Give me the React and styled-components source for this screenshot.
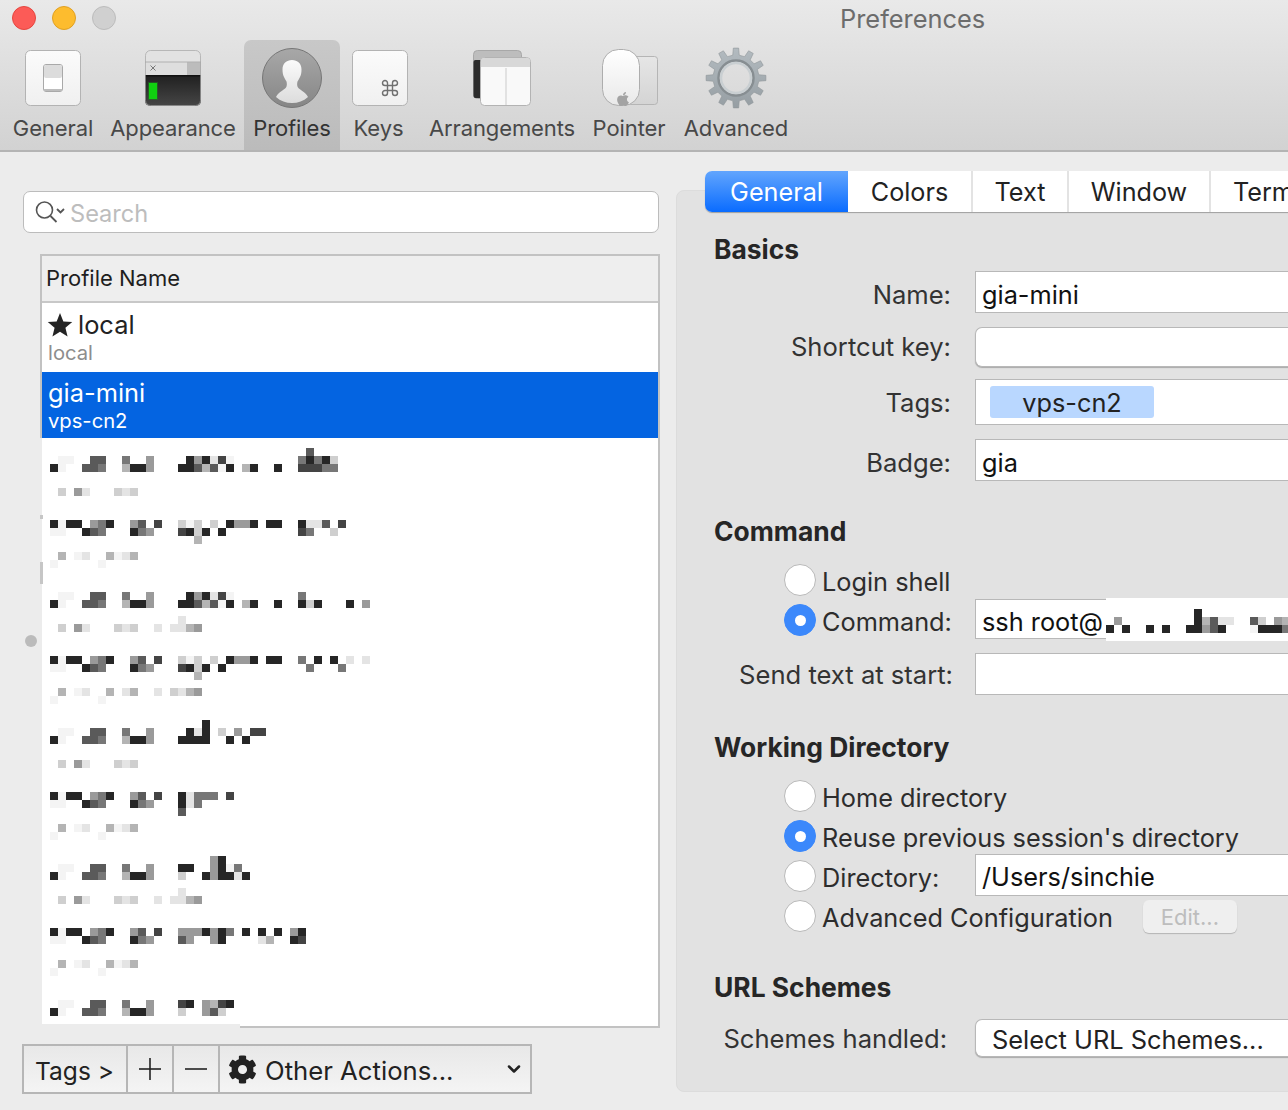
import React from 'react';
import styled, { createGlobalStyle } from 'styled-components';
import { FaApple, FaCog } from 'react-icons/fa';
import { Command as CommandGlyph, ChevronDown } from 'lucide-react';

const FONT = 'Inter, "Noto Sans", "Liberation Sans", sans-serif';

const GlobalStyle = createGlobalStyle`
  html, body {
    margin: 0;
    padding: 0;
    background: #ececec;
  }
  body {
    font-family: ${FONT};
    color: #2b2b2b;
    -webkit-font-smoothing: antialiased;
  }
`;

const Window = styled.div`
  width: 1288px;
  height: 1110px;
  overflow: hidden;
  background: #ececec;
  display: flex;
  flex-direction: column;
`;

const Header = styled.header`
  height: 152px;
  box-sizing: border-box;
  flex: none;
  border-bottom: 2px solid #b4b4b4;
  background: linear-gradient(#e9e9e9, #d2d2d2);
`;

const TitleBar = styled.div`
  height: 40px;
  display: flex;
  align-items: flex-start;
  padding: 6px 0 0 12px;
  box-sizing: border-box;
`;

const Light = styled.span`
  width: 24px;
  height: 24px;
  box-sizing: border-box;
  border-radius: 50%;
  background: ${(props) => props.$color};
  border: 1px solid ${(props) => props.$edge};
  margin-right: 16px;
`;

const Title = styled.div`
  margin: -1px 0 0 708px;
  font-size: 25.4px;
  line-height: 28px;
  color: #6c6c6c;
`;

const Toolbar = styled.nav`
  display: flex;
  padding-left: 4px;
`;

const ToolItem = styled.div`
  width: ${(props) => props.$width}px;
  height: 110px;
  display: flex;
  flex-direction: column;
  align-items: center;
  padding-top: 6px;
  box-sizing: border-box;
  border-radius: 7px 7px 0 0;
  background: ${(props) => (props.$active ? 'linear-gradient(#c8c8c8, #bbbbbb)' : 'none')};
  svg {
    display: block;
    flex: none;
  }
`;

const ToolLabel = styled.span`
  margin-top: 4px;
  font-size: 22px;
  line-height: 28px;
  letter-spacing: -0.1px;
  white-space: nowrap;
  color: ${(props) => (props.$active ? '#333' : '#484848')};
`;

const Main = styled.main`
  flex: 1;
  display: flex;
  min-height: 0;
`;

const LeftColumn = styled.section`
  position: relative;
  width: 654px;
  flex: none;
  box-sizing: border-box;
  padding: 39px 0 0 22px;
`;

const SearchBox = styled.div`
  width: 636px;
  height: 42px;
  box-sizing: border-box;
  margin-left: 1px;
  padding-left: 10px;
  display: flex;
  align-items: center;
  background: #fff;
  border: 1px solid #bcbcbc;
  border-radius: 7px;
`;

const SearchHint = styled.span`
  margin-left: 2px;
  padding-top: 3px;
  font-size: 23.6px;
  color: #bdbdbd;
`;

const ProfileList = styled.div`
  position: relative;
  width: 620px;
  height: 774px;
  box-sizing: border-box;
  margin: 21px 0 0 18px;
  display: flex;
  flex-direction: column;
  border: 2px solid #c2c2c2;
  background: #fff;
`;

const ListHeader = styled.div`
  height: 47px;
  flex: none;
  box-sizing: border-box;
  padding: 0 0 2px 4px;
  display: flex;
  align-items: center;
  font-size: 22px;
  color: #1e1e1e;
  background: #eeeeee;
  border-bottom: 2px solid #c8c8c8;
`;

const ProfileRow = styled.div`
  height: ${(props) => props.$height}px;
  flex: none;
  box-sizing: border-box;
  padding: ${(props) => props.$top}px 0 0 6px;
  background: ${(props) => (props.$selected ? '#0464e1' : '#fff')};
  color: ${(props) => (props.$selected ? '#fff' : '#222')};
`;

const ProfileName = styled.div`
  display: flex;
  align-items: center;
  gap: 5px;
  font-size: 25.4px;
  line-height: 32px;
  svg {
    margin-left: -1px;
  }
`;

const ProfileTag = styled.div`
  font-size: 20.2px;
  line-height: 24px;
  color: ${(props) => (props.$selected ? '#fff' : '#8d8d8d')};
`;

const BlurredRows = styled.div`
  position: relative;
  flex: 1;
  padding-top: 2px;
  background: #fff;
  &::before {
    content: '';
    position: absolute;
    left: -2px;
    top: 0;
    bottom: 0;
    width: 2px;
    background: #ececec;
  }
  svg {
    display: block;
    margin-left: 8px;
  }
`;

const BottomPatch = styled.span`
  position: absolute;
  left: -2px;
  bottom: -2px;
  width: 200px;
  height: 4px;
  background: #ececec;
`;

const SplitTick = styled.span`
  position: absolute;
  left: 40px;
  top: ${(props) => props.$top}px;
  width: 3px;
  height: ${(props) => props.$height}px;
  background: #c6c6c6;
`;

const SplitHandle = styled.span`
  position: absolute;
  left: 25px;
  top: 483px;
  width: 12px;
  height: 12px;
  border-radius: 50%;
  background: #bbbbbb;
`;

const ActionBar = styled.div`
  width: 510px;
  height: 50px;
  box-sizing: border-box;
  margin-top: 16px;
  display: flex;
  border: 2px solid #b6b6b6;
  background: linear-gradient(#e8e8e8, #f4f4f4);
  color: #222;
`;

const ActionCell = styled.div`
  width: ${(props) => props.$width}px;
  flex: ${(props) => (props.$grow ? 1 : 'none')};
  box-sizing: border-box;
  display: flex;
  align-items: center;
  justify-content: ${(props) => (props.$grow ? 'flex-start' : 'center')};
  gap: 8px;
  padding: ${(props) => (props.$grow ? '0 6px 0 8px' : '0 1px 0 0')};
  border-right: ${(props) => (props.$grow ? 'none' : '2px solid #b6b6b6')};
`;

const ActionText = styled.span`
  flex: ${(props) => (props.$wide ? 1 : 'none')};
  padding-top: 3px;
  font-size: ${(props) => (props.$wide ? 25.7 : 24.5)}px;
  white-space: nowrap;
`;

const RightColumn = styled.section`
  width: 680px;
  flex: none;
  padding: 19px 0 0 22px;
  box-sizing: border-box;
`;

const TabBar = styled.div`
  position: relative;
  z-index: 1;
  height: 41px;
  margin: 0 0 -22px 29px;
  display: flex;
  background: #fff;
  border-radius: 7px 0 0 7px;
  box-shadow: 0 1px 1px rgba(0, 0, 0, 0.3);
`;

const Tab = styled.div`
  width: ${(props) => props.$width}px;
  flex: none;
  box-sizing: border-box;
  display: flex;
  align-items: center;
  justify-content: ${(props) => (props.$clip ? 'flex-start' : 'center')};
  padding-left: ${(props) => (props.$clip ? '22px' : '0')};
  font-size: 25.2px;
  color: ${(props) => (props.$active ? '#fff' : '#222')};
  background: ${(props) => (props.$active ? 'linear-gradient(#62a5fd, #0a6cff)' : 'none')};
  border-radius: ${(props) => (props.$active ? '7px 0 0 7px' : '0')};
  border-right: ${(props) => (props.$active ? 'none' : '2px solid #e3e3e3')};
`;

const Panel = styled.div`
  height: 902px;
  box-sizing: border-box;
  padding-top: 42px;
  background: #e2e2e2;
  border: 1px solid #dcdcdc;
  border-radius: 8px;
`;

const SectionTitle = styled.h2`
  margin: ${(props) => props.$top || 0}px 0 0 37px;
  font-size: 26.4px;
  line-height: 32px;
  font-weight: 700;
  color: #262626;
`;

const FormRow = styled.div`
  display: grid;
  grid-template-columns: 274px 1fr;
  column-gap: 24px;
  align-items: center;
  height: ${(props) => props.$height}px;
  margin-top: ${(props) => props.$top || 0}px;
`;

const FieldLabel = styled.label`
  text-align: right;
  font-size: 25.6px;
  line-height: 30px;
  white-space: nowrap;
  color: #333;
  margin-right: ${(props) => props.$inset || 0}px;
  padding-top: ${(props) => props.$drop || 0}px;
`;

const Field = styled.div`
  height: ${(props) => props.$height}px;
  box-sizing: border-box;
  padding: 4px 0 0 6px;
  display: flex;
  align-items: center;
  font-size: 25.3px;
  color: #111;
  background: #fff;
  border: 1px solid #b8b8b8;
  border-right: none;
  border-radius: ${(props) => (props.$round ? '7px 0 0 7px' : '0')};
  box-shadow: ${(props) => (props.$round ? '0 1px 1px rgba(0, 0, 0, 0.25)' : 'none')};
  margin-top: ${(props) => props.$shift || 0}px;
`;

const TagChip = styled.span`
  width: 164px;
  height: 32px;
  margin: -4px 0 0 8px;
  border-radius: 3px;
  background: #b9d7ff;
  display: flex;
  align-items: center;
  justify-content: center;
  font-size: 25.3px;
  color: #222;
`;

const RadioCell = styled.div`
  display: flex;
  align-items: center;
  padding-left: 107px;
  height: 100%;
`;

const RadioDot = styled.span`
  width: 32px;
  height: 32px;
  flex: none;
  box-sizing: border-box;
  border-radius: 50%;
  display: flex;
  align-items: center;
  justify-content: center;
  background: ${(props) => (props.$on ? '#3b88fb' : '#fff')};
  border: 1px solid ${(props) => (props.$on ? '#3b88fb' : '#b9b9b9')};
  &::after {
    content: '';
    display: ${(props) => (props.$on ? 'block' : 'none')};
    width: 11px;
    height: 11px;
    border-radius: 50%;
    background: #fff;
  }
`;

const RadioText = styled.span`
  margin-left: 6px;
  font-size: 25.3px;
  line-height: 30px;
  padding-top: 3px;
  white-space: nowrap;
  color: #2d2d2d;
`;

const EditButton = styled.div`
  width: 94px;
  height: 33px;
  flex: none;
  margin-left: 30px;
  padding-top: 2px;
  box-sizing: border-box;
  display: flex;
  align-items: center;
  justify-content: center;
  font-size: 22px;
  color: #bdbdbd;
  background: #efefef;
  border-radius: 6px;
  box-shadow: 0 1px 1px rgba(0, 0, 0, 0.2);
`;

const CommandBox = styled.div`
  position: relative;
`;

const CommandPatch = styled.span`
  position: absolute;
  left: 131px;
  top: -3px;
  width: 200px;
  height: 43px;
  background: #fff;
  svg {
    display: block;
    margin-top: 11px;
  }
`;

const SelectButton = styled(Field)`
  padding: 2px 0 0 16px;
  font-size: 25.4px;
  color: #222;
`;

const SHADES = {
  1: '#f4f4f4',
  2: '#e4e4e4',
  3: '#cfcfcf',
  4: '#b4b4b4',
  5: '#9a9a9a',
  6: '#777777',
  7: '#5a5a5a',
  8: '#444444',
  9: '#262626',
};

const gap = (n) => '.'.repeat(n);

// pieces that repeat from one redacted profile to the next
const AU = '.11..77..6..5...';
const AL = '91..776..4995...';
const BU = '9199.569..57.8..';
const BL = '11..976...965...';
const S1 = '.3.52...323';
const S2 = '.4.12..4124';
const S2B = '1.....1';
const S3 = '.3.52...323..2.2245';
const S4 = '.4.12..4.24..2.3245';
const OVER = `${gap(16)}2`;

const REDACTED = [
  ['', `${gap(32)}7`, `${AU}.959281........69693`, `${AL}9974719.49..9..88866`, '', '', S1, ''],
  ['', '', `${BU}313.3.9559.99..9227.8`, `${BL}8939.9.........86..3`, `${gap(18)}4`, '', S2, S2B, ''],
  ['', '', `${AU}.959281........6`, `${AL}9974719.49..9..939...9.5`, '', OVER, S3, '', ''],
  ['', `${BU}313.3.9559.99..6.9.9.2.2`, `${BL}8939.9..........6...6`, `${gap(18)}4`, '', S4, S2B, '', ''],
  [`${gap(19)}9`, `${AU}.929.3.5.88`, `${AL}9999..9.9`, '', '', S1, '', ''],
  ['', `${BU}92666.8`, `${BL}926`, `${gap(16)}7`, '', S2, S2B, '', ''],
  [`${gap(20)}59`, `${AU}99..5916`, `${AL}3..959929`, '', OVER, S3, '', '', ''],
  [`${BU}5559596.9.9.9.59`, `${BL}75..59....24..98`, '', '', S2, S2B, '', '', ''],
  [`${AU}89.5489`, `${AL}3..573`],
];

const COMMAND_REDACTED = [
  `${gap(11)}9`,
  `.5${gap(9)}94722..73.54`,
  '9.9..9.9..99579...19996',
];

const PixelBlocks = ({ lines }) => (
  <svg width="400" height={lines.length * 8} shapeRendering="crispEdges" aria-hidden="true">
    {lines.map((line, y) =>
      line.split('').map((shade, x) =>
        shade === '.' ? null : (
          <rect key={`${x}-${y}`} x={x * 8} y={y * 8} width="8" height="8" fill={SHADES[shade]} />
        ),
      ),
    )}
  </svg>
);

const gearPath = (teeth, outer, root, cx, cy) => {
  const step = (Math.PI * 2) / teeth;
  const point = (r, a) => `${(cx + r * Math.sin(a)).toFixed(2)} ${(cy - r * Math.cos(a)).toFixed(2)}`;
  let d = '';
  for (let i = 0; i < teeth; i += 1) {
    const a = i * step;
    d += `${i === 0 ? 'M' : 'L'}${point(root, a - step * 0.27)} `;
    d += `L${point(outer, a - step * 0.17)} L${point(outer, a + step * 0.17)} L${point(root, a + step * 0.27)} `;
  }
  return `${d}Z`;
};

const GeneralIcon = () => (
  <svg width="64" height="64" viewBox="0 0 64 64">
    <defs>
      <linearGradient id="keycap" x1="0" y1="0" x2="0" y2="1">
        <stop offset="0" stopColor="#fbfbfb" />
        <stop offset="1" stopColor="#f0f0f0" />
      </linearGradient>
    </defs>
    <rect x="4.500" y="4.500" width="55" height="55" rx="5" fill="url(#keycap)" stroke="#b3b3b3" />
    <rect x="22.500" y="18.500" width="19" height="27" rx="2.500" fill="#fff" stroke="#a9a9a9" />
    <rect x="23" y="19" width="18" height="13" rx="2" fill="#dcdcdc" />
    <rect x="23" y="43" width="18" height="2" fill="#bdbdbd" />
  </svg>
);

const AppearanceIcon = () => (
  <svg width="64" height="64" viewBox="0 0 64 64">
    <defs>
      <linearGradient id="term" x1="0" y1="0" x2="0" y2="1">
        <stop offset="0" stopColor="#212121" />
        <stop offset="1" stopColor="#464646" />
      </linearGradient>
      <clipPath id="termClip">
        <rect x="4" y="4" width="56" height="56" rx="5" />
      </clipPath>
    </defs>
    <g clipPath="url(#termClip)">
      <rect x="4" y="4" width="56" height="12" fill="#e2e2e2" />
      <rect x="4" y="16" width="56" height="14" fill="#dedede" />
      <rect x="46" y="16" width="14" height="14" fill="#bcbcbc" />
      <rect x="4" y="15.500" width="56" height="1" fill="#b0b0b0" />
      <rect x="4" y="30" width="56" height="30" fill="url(#term)" />
      <rect x="4" y="29" width="56" height="1.500" fill="#111" />
      <rect x="7" y="36" width="10" height="18" fill="#1f7a1f" opacity="0.55" />
      <rect x="8" y="37" width="8" height="16" fill="#10d010" />
    </g>
    <rect x="4.500" y="4.500" width="55" height="55" rx="5" fill="none" stroke="#a5a5a5" strokeOpacity="0.7" />
    <path d="M9.500 19.500l5 5m0-5l-5 5" stroke="#777" strokeWidth="1" fill="none" />
  </svg>
);

const ProfilesIcon = () => (
  <svg width="64" height="64" viewBox="0 0 64 64">
    <defs>
      <linearGradient id="avatar" x1="0" y1="0" x2="0" y2="1">
        <stop offset="0" stopColor="#a8a8a8" />
        <stop offset="1" stopColor="#868686" />
      </linearGradient>
      <linearGradient id="person" x1="0" y1="0" x2="0" y2="1">
        <stop offset="0" stopColor="#fbfbfb" />
        <stop offset="1" stopColor="#dcdcdc" />
      </linearGradient>
    </defs>
    <circle cx="32" cy="32" r="29.500" fill="url(#avatar)" stroke="#767676" />
    <path
      d="M32 14c-5.500 0-9.500 3.500-9.500 9.500 0 3 .5 5.500 1.500 7.500.7 1.500 1.500 3 2.500 4.500.5 2 .6 4.500-.5 6-2 2.500-7 4-10 9.500 4.500 4 10 6 16 6s11.500-2 16-6c-3-5.500-8-7-10-9.500-1.100-1.500-1-4-.5-6 1-1.500 1.800-3 2.500-4.500 1-2 1.500-4.500 1.500-7.500 0-6-4-9.500-9.500-9.500z"
      fill="url(#person)"
    />
  </svg>
);

const KeysIcon = () => (
  <svg width="64" height="64" viewBox="0 0 64 64">
    <rect x="5.500" y="4.500" width="55" height="55" rx="5" fill="url(#keycap)" stroke="#b3b3b3" />
    <CommandGlyph x="33" y="32" width="20" height="20" color="#707070" strokeWidth={1.7} />
  </svg>
);

const ArrangementsIcon = () => (
  <svg width="64" height="64" viewBox="0 0 64 64">
    <rect x="3.500" y="4.500" width="48" height="48" rx="4" fill="#bdbdbd" stroke="#a8a8a8" />
    <rect x="3.500" y="14" width="9" height="38" rx="2" fill="#2c2c2c" />
    <rect x="10.500" y="11.500" width="50" height="48" rx="4" fill="#f9f9f9" stroke="#b3b3b3" />
    <path d="M11 21v-6a3 3 0 0 1 3-3h43a3 3 0 0 1 3 3v6z" fill="#d8d8d8" />
    <path d="M36 22v37" stroke="#cbcbcb" fill="none" />
  </svg>
);

const PointerIcon = () => (
  <svg width="64" height="64" viewBox="0 0 64 64">
    <defs>
      <linearGradient id="pad" x1="0" y1="0" x2="0" y2="1">
        <stop offset="0" stopColor="#e6e6e6" />
        <stop offset="1" stopColor="#d4d4d4" />
      </linearGradient>
      <linearGradient id="mouse" x1="0" y1="0" x2="0" y2="1">
        <stop offset="0" stopColor="#ffffff" />
        <stop offset="1" stopColor="#e9e9e9" />
      </linearGradient>
    </defs>
    <rect x="30.500" y="10.500" width="30" height="48" rx="3" fill="url(#pad)" stroke="#b5b5b5" />
    <rect x="5.500" y="3.500" width="37" height="56" rx="16" fill="url(#mouse)" stroke="#adadad" />
    <FaApple x="18" y="45" width="7" height="7" color="#a3a3a3" />
  </svg>
);

const AdvancedIcon = () => (
  <svg width="64" height="64" viewBox="0 0 64 64">
    <defs>
      <linearGradient id="steel" x1="0" y1="0" x2="0" y2="1">
        <stop offset="0" stopColor="#b3bbc0" />
        <stop offset="1" stopColor="#969ea3" />
      </linearGradient>
    </defs>
    <path
      d={`${gearPath(12, 30, 23, 32, 32)} M32 15a17 17 0 1 0 .01 0z`}
      fill="url(#steel)"
      fillRule="evenodd"
      stroke="#8e9599"
      strokeWidth="0.6"
    />
    <circle cx="32" cy="32" r="17.500" fill="none" stroke="#878e92" strokeWidth="2.500" />
    <circle cx="32" cy="32" r="15" fill="none" stroke="#c9cfd2" strokeWidth="2.500" />
  </svg>
);

const TOOLS = [
  { label: 'General', width: 98, Icon: GeneralIcon },
  { label: 'Appearance', width: 142, Icon: AppearanceIcon },
  { label: 'Profiles', width: 96, Icon: ProfilesIcon, active: true },
  { label: 'Keys', width: 77, Icon: KeysIcon },
  { label: 'Arrangements', width: 170, Icon: ArrangementsIcon },
  { label: 'Pointer', width: 84, Icon: PointerIcon },
  { label: 'Advanced', width: 130, Icon: AdvancedIcon },
];

const TABS = [
  { label: 'General', width: 143, active: true },
  { label: 'Colors', width: 125 },
  { label: 'Text', width: 96 },
  { label: 'Window', width: 142 },
  { label: 'Terminal', width: 140, clip: true },
];

const SearchIcon = () => (
  <svg width="34" height="26" viewBox="0 0 34 26" fill="none" stroke="#555" aria-hidden="true">
    <circle cx="10.500" cy="11" r="8" strokeWidth="1.600" />
    <path d="M16.500 17l6 6" strokeWidth="1.800" />
    <path d="M23 10l3.500 3.500L30 10" strokeWidth="1.800" />
  </svg>
);

const StarIcon = () => (
  <svg width="26" height="26" viewBox="0 0 24 24" aria-hidden="true">
    <path d="M12 1l3.100 7.700 8.200.6-6.300 5.300 2 8-7-4.400-7 4.400 2-8L.7 9.300l8.200-.6z" fill="#242424" />
  </svg>
);

const LineIcon = ({ plus }) => (
  <svg width="24" height="24" viewBox="0 0 24 24" stroke="#222" strokeWidth="1.600" aria-hidden="true">
    <path d="M1 12h22" />
    {plus && <path d="M12 1v22" />}
  </svg>
);

const App = () => (
  <Window>
    <GlobalStyle />
    <Header>
      <TitleBar>
        <Light $color="#fc5b57" $edge="#e5463f" />
        <Light $color="#fdbc2e" $edge="#e0a023" />
        <Light $color="#d0d0d0" $edge="#bcbcbc" />
        <Title>Preferences</Title>
      </TitleBar>
      <Toolbar>
        {TOOLS.map(({ label, width, Icon, active }) => (
          <ToolItem key={label} $width={width} $active={active}>
            <Icon />
            <ToolLabel $active={active}>{label}</ToolLabel>
          </ToolItem>
        ))}
      </Toolbar>
    </Header>
    <Main>
      <LeftColumn>
        <SearchBox>
          <SearchIcon />
          <SearchHint>Search</SearchHint>
        </SearchBox>
        <ProfileList>
          <ListHeader>Profile Name</ListHeader>
          <ProfileRow $height={69} $top={6}>
            <ProfileName>
              <StarIcon />
              local
            </ProfileName>
            <ProfileTag>local</ProfileTag>
          </ProfileRow>
          <ProfileRow $height={66} $top={5} $selected>
            <ProfileName>gia-mini</ProfileName>
            <ProfileTag $selected>vps-cn2</ProfileTag>
          </ProfileRow>
          <BlurredRows>
            {REDACTED.map((lines, index) => (
              <PixelBlocks key={index} lines={lines} />
            ))}
          </BlurredRows>
          <BottomPatch />
        </ProfileList>
        <SplitTick $top={363} $height={4} />
        <SplitTick $top={410} $height={22} />
        <SplitHandle />
        <ActionBar>
          <ActionCell $width={104}>
            <ActionText>Tags &gt;</ActionText>
          </ActionCell>
          <ActionCell $width={46}>
            <LineIcon plus />
          </ActionCell>
          <ActionCell $width={46}>
            <LineIcon />
          </ActionCell>
          <ActionCell $grow>
            <FaCog size={29} color="#222" />
            <ActionText $wide>Other Actions...</ActionText>
            <ChevronDown size={20} strokeWidth={3} color="#222" />
          </ActionCell>
        </ActionBar>
      </LeftColumn>
      <RightColumn>
        <TabBar>
          {TABS.map(({ label, width, active, clip }) => (
            <Tab key={label} $width={width} $active={active} $clip={clip}>
              {label}
            </Tab>
          ))}
        </TabBar>
        <Panel>
          <SectionTitle>Basics</SectionTitle>
          <FormRow $height={42} $top={6}>
            <FieldLabel $drop={5}>Name:</FieldLabel>
            <Field $height={42}>gia-mini</Field>
          </FormRow>
          <FormRow $height={40} $top={14}>
            <FieldLabel>Shortcut key:</FieldLabel>
            <Field $height={40} $round />
          </FormRow>
          <FormRow $height={46} $top={12}>
            <FieldLabel $drop={1}>Tags:</FieldLabel>
            <Field $height={46}>
              <TagChip>vps-cn2</TagChip>
            </Field>
          </FormRow>
          <FormRow $height={42} $top={14}>
            <FieldLabel $drop={5}>Badge:</FieldLabel>
            <Field $height={42}>gia</Field>
          </FormRow>

          <SectionTitle $top={34}>Command</SectionTitle>
          <FormRow $height={40} $top={13}>
            <RadioCell>
              <RadioDot />
              <RadioText>Login shell</RadioText>
            </RadioCell>
          </FormRow>
          <FormRow $height={40}>
            <RadioCell>
              <RadioDot $on />
              <RadioText>Command:</RadioText>
            </RadioCell>
            <CommandBox>
              <Field $height={40} $shift={-2}>
                ssh root@
              </Field>
              <CommandPatch>
                <PixelBlocks lines={COMMAND_REDACTED} />
              </CommandPatch>
            </CommandBox>
          </FormRow>
          <FormRow $height={42} $top={13}>
            <FieldLabel $inset={-2} $drop={1}>
              Send text at start:
            </FieldLabel>
            <Field $height={42} />
          </FormRow>

          <SectionTitle $top={36}>Working Directory</SectionTitle>
          <FormRow $height={40} $top={13}>
            <RadioCell>
              <RadioDot />
              <RadioText>Home directory</RadioText>
            </RadioCell>
          </FormRow>
          <FormRow $height={40}>
            <RadioCell>
              <RadioDot $on />
              <RadioText>Reuse previous session's directory</RadioText>
            </RadioCell>
          </FormRow>
          <FormRow $height={40}>
            <RadioCell>
              <RadioDot />
              <RadioText>Directory:</RadioText>
            </RadioCell>
            <Field $height={42} $shift={-3}>
              /Users/sinchie
            </Field>
          </FormRow>
          <FormRow $height={40}>
            <RadioCell>
              <RadioDot />
              <RadioText>Advanced Configuration</RadioText>
              <EditButton>Edit...</EditButton>
            </RadioCell>
          </FormRow>

          <SectionTitle $top={35}>URL Schemes</SectionTitle>
          <FormRow $height={38} $top={16}>
            <FieldLabel $inset={4} $drop={1}>
              Schemes handled:
            </FieldLabel>
            <SelectButton $height={38} $round>
              Select URL Schemes...
            </SelectButton>
          </FormRow>
        </Panel>
      </RightColumn>
    </Main>
  </Window>
);

export default App;
